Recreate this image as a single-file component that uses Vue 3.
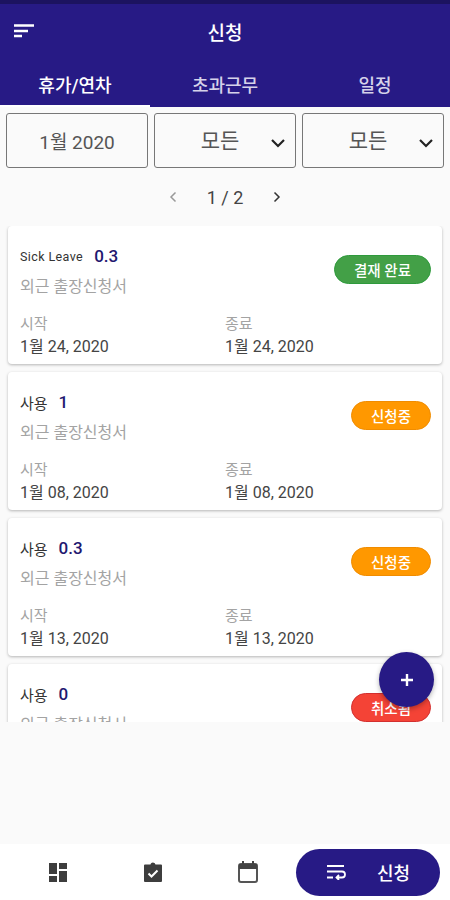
<script setup>
const cards = [
  { type: 'Sick Leave', small: true, amount: '0.3', status: '결재 완료', tone: 'done', start: '1월 24, 2020', end: '1월 24, 2020' },
  { type: '사용', amount: '1', status: '신청중', tone: 'wait', start: '1월 08, 2020', end: '1월 08, 2020' },
  { type: '사용', amount: '0.3', status: '신청중', tone: 'wait', start: '1월 13, 2020', end: '1월 13, 2020' },
  { type: '사용', amount: '0', status: '취소됨', tone: 'cancel' },
]
</script>

<template>
  <div class="page">
    <header class="header">
      <div class="topbar">
        <svg class="menu" width="20" height="14" viewBox="0 0 20 14">
          <path d="M0 1.500h20M0 7h14M0 12h8" stroke="#fff" stroke-width="2.500" fill="none" />
        </svg>
        <h1>신청</h1>
      </div>
      <nav class="tabs">
        <div class="tab active">휴가/연차</div>
        <div class="tab">초과근무</div>
        <div class="tab">일정</div>
      </nav>
    </header>

    <div class="filters">
      <div class="filter plain">1월 2020</div>
      <div class="filter">
        <span>모든</span>
        <svg width="16" height="10" viewBox="0 0 16 10"><path d="M2 2l6 6 6-6" stroke="#222" stroke-width="2.2" fill="none" /></svg>
      </div>
      <div class="filter">
        <span>모든</span>
        <svg width="16" height="10" viewBox="0 0 16 10"><path d="M2 2l6 6 6-6" stroke="#222" stroke-width="2.2" fill="none" /></svg>
      </div>
    </div>

    <div class="pager">
      <svg width="8" height="12" viewBox="0 0 8 12"><path d="M6.5 1.5L2 6l4.5 4.5" stroke="#999" stroke-width="1.5" fill="none" /></svg>
      <span>1 / 2</span>
      <svg width="8" height="12" viewBox="0 0 8 12"><path d="M1.5 1.5L6 6l-4.5 4.5" stroke="#333" stroke-width="1.5" fill="none" /></svg>
    </div>

    <div class="list">
      <div v-for="(c, i) in cards" :key="i" class="card">
        <div class="card-top">
          <div>
            <div class="title">
              <span class="type" :class="{ small: c.small }">{{ c.type }}</span>
              <span class="amount">{{ c.amount }}</span>
            </div>
            <div class="sub">외근 출장신청서</div>
          </div>
          <span class="badge" :class="c.tone">{{ c.status }}</span>
        </div>
        <div v-if="c.start" class="dates">
          <div>
            <div class="label">시작</div>
            <div class="date">{{ c.start }}</div>
          </div>
          <div>
            <div class="label">종료</div>
            <div class="date">{{ c.end }}</div>
          </div>
        </div>
      </div>
    </div>

    <button class="fab">
      <svg width="16" height="16" viewBox="0 0 16 16"><path d="M8 2v12M2 8h12" stroke="#fff" stroke-width="2.4" fill="none" /></svg>
    </button>

    <div class="spacer"></div>

    <footer class="bottom">
      <div class="bottom-icon">
        <svg width="18" height="19" viewBox="0 0 18 19" fill="#3d3d3d">
          <path d="M0 0h8v11H0zM10 0h8v6h-8zM10 8h8v11h-8zM0 13h8v6H0z" />
        </svg>
      </div>
      <div class="bottom-icon">
        <svg width="18" height="20" viewBox="0 0 18 20">
          <path d="M1 2.500h16a1 1 0 0 1 1 1V19a1 1 0 0 1-1 1H1a1 1 0 0 1-1-1V3.500a1 1 0 0 1 1-1z" fill="#3d3d3d" />
          <path d="M6.500 3a2.500 2.500 0 0 1 5 0v1h-5z" fill="#3d3d3d" />
          <path d="M4.500 11.500l3 3 6-6" stroke="#fff" stroke-width="2" fill="none" />
        </svg>
      </div>
      <div class="bottom-icon">
        <svg width="20" height="22" viewBox="0 0 20 22">
          <rect x="1" y="3" width="18" height="18" rx="2" fill="none" stroke="#555" stroke-width="2" />
          <path d="M1 3h18v5H1z" fill="#444" />
          <path d="M5 0v4M15 0v4" stroke="#444" stroke-width="2" />
        </svg>
      </div>
      <div class="apply">
        <svg width="20" height="16" viewBox="0 0 20 16">
          <path d="M1 2h17M1 7.500h15a3 3 0 0 1 0 6h-5M13 11l-2.500 2.500L13 16M1 13.500h6" stroke="#fff" stroke-width="1.800" fill="none" />
        </svg>
        <span>신청</span>
      </div>
    </footer>
  </div>
</template>

<style scoped>
.page {
  position: relative;
  width: 450px;
  height: 900px;
  display: flex;
  flex-direction: column;
  background: #fafafa;
  font-family: Roboto, "Noto Sans CJK KR", sans-serif;
  overflow: hidden;
}
.header {
  background: #271a85;
  border-top: 4px solid #1c1360;
  height: 107px;
  box-sizing: border-box;
  flex-shrink: 0;
}
.topbar {
  height: 56px;
  position: relative;
  display: flex;
  align-items: center;
  justify-content: center;
}
.menu {
  position: absolute;
  left: 14px;
  top: 20px;
}
.topbar h1 {
  margin: 0 0 2px;
  color: #fff;
  font-size: 19px;
  font-weight: 500;
}
.tabs {
  display: flex;
  height: 47px;
}
.tab {
  flex: 1;
  display: flex;
  align-items: center;
  justify-content: center;
  color: #d5d2ea;
  font-size: 18px;
  font-weight: 500;
  box-sizing: border-box;
}
.tab.active {
  color: #fff;
  border-bottom: 2px solid #fff;
  padding-top: 2px;
}
.filters {
  display: flex;
  gap: 6px;
  padding: 6px 6px 0;
}
.filter {
  flex: 1;
  height: 55px;
  box-sizing: border-box;
  border: 1.5px solid #777;
  border-radius: 3px;
  background: #fafafa;
  display: flex;
  align-items: center;
  justify-content: center;
  position: relative;
  font-size: 19px;
  color: #555;
}
.filter span {
  font-size: 21px;
  margin-right: 10px;
  margin-top: -3px;
}
.filter svg {
  position: absolute;
  right: 9px;
  top: 24px;
}
.pager {
  height: 58px;
  display: flex;
  align-items: center;
  justify-content: center;
  gap: 30px;
  font-size: 18px;
  color: #444;
}
.list {
  height: 496px;
  overflow: hidden;
  padding: 0 8px;
  display: flex;
  flex-direction: column;
  gap: 8px;
  flex-shrink: 0;
}
.card {
  background: #fff;
  border-radius: 4px;
  box-shadow: 0 1px 3px rgba(0, 0, 0, 0.28);
  height: 138px;
  flex-shrink: 0;
  box-sizing: border-box;
  padding: 19px 11px 0 12px;
}
.card-top {
  display: flex;
  justify-content: space-between;
  align-items: center;
}
.title {
  display: flex;
  align-items: center;
  gap: 11px;
  height: 22px;
}
.type {
  font-size: 15px;
  color: #333;
}
.type.small {
  font-size: 12.5px;
  letter-spacing: 0.4px;
}
.amount {
  font-size: 17px;
  font-weight: 500;
  color: #1f1870;
}
.sub {
  font-size: 16px;
  color: #a3a3a3;
  margin-top: 6px;
}
.badge {
  height: 29px;
  box-sizing: border-box;
  border-radius: 15px;
  padding: 0 19px;
  margin-top: -3px;
  display: flex;
  align-items: center;
  font-size: 14.5px;
  font-weight: 500;
  color: #fff;
}
.badge.done {
  background: #43a047;
  border: 1.5px solid #2e9a3c;
}
.badge.wait {
  background: #ff9800;
  border: 1.5px solid #f08c00;
}
.badge.cancel {
  background: #f44336;
  border: 1.5px solid #d32f2f;
}
.dates {
  display: grid;
  grid-template-columns: 205px 1fr;
  margin-top: 15px;
}
.label {
  font-size: 15px;
  color: #a3a3a3;
}
.date {
  font-size: 16px;
  color: #444;
}
.fab {
  position: absolute;
  left: 379px;
  top: 652px;
  width: 55px;
  height: 55px;
  border: none;
  border-radius: 50%;
  background: #271a85;
  box-shadow: 0 2px 5px rgba(0, 0, 0, 0.3);
  display: flex;
  align-items: center;
  justify-content: center;
  padding: 0;
}
.spacer {
  flex: 1;
}
.bottom {
  height: 56px;
  background: #fff;
  display: flex;
  align-items: center;
  flex-shrink: 0;
  padding: 0 0 0 10px;
}
.bottom-icon {
  width: 95px;
  display: flex;
  justify-content: center;
}
.apply {
  width: 144px;
  height: 47px;
  margin-left: 1px;
  border-radius: 24px;
  background: #271a85;
  color: #fff;
  font-size: 18px;
  font-weight: 500;
  display: flex;
  align-items: center;
  justify-content: center;
  gap: 31px;
}
</style>

<style>
html, body {
  margin: 0;
  background: #fafafa;
}
</style>
